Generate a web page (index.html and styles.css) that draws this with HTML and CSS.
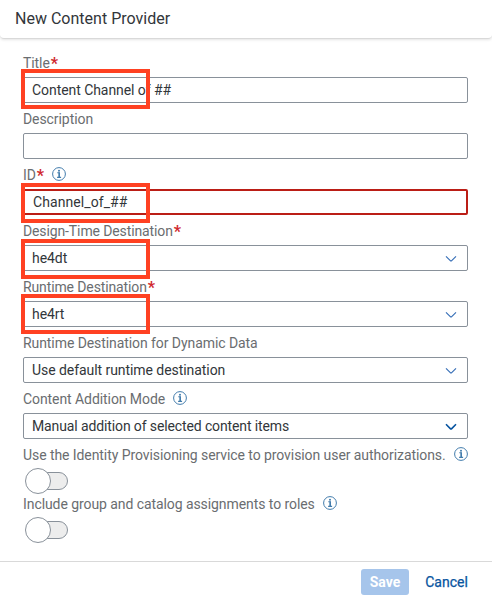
FILE: index.html
```html
<!DOCTYPE html>
<html lang="en">
<head>
<meta charset="utf-8">
<title>New Content Provider</title>
<link rel="stylesheet" href="styles.css">
</head>
<body>
<svg class="defs" width="0" height="0" aria-hidden="true">
  <symbol id="info" viewBox="0 0 14 14"><circle cx="7" cy="7" r="6.4" fill="none" stroke="currentColor" stroke-width="1"/><circle cx="7" cy="3.7" r="1" fill="currentColor"/><path d="M5.3 5.8H7.3V10.4M5.1 10.4H9.1" fill="none" stroke="currentColor" stroke-width="1.1"/><path d="M7.2 5.4V10.4" stroke="currentColor" stroke-width="1.5"/></symbol>
  <symbol id="chevron" viewBox="0 0 12 8"><path d="M1 1.3L5.3 5.6Q6 6.3 6.7 5.6L11 1.3" fill="none" stroke="currentColor"/></symbol>
</svg>
<main class="dialog">
  <header class="header"><h1 class="title">New Content Provider</h1></header>
  <form class="form">
    <div class="field"><label class="label"><span>Title</span><b class="required">*</b></label><div class="input"><span>Content Channel of ##</span></div><i class="highlight raised"></i></div>
    <div class="field"><label class="label"><span>Description</span></label><div class="input"></div></div>
    <div class="field"><label class="label"><span>ID</span><b class="required">*</b><svg class="info"><use href="#info"/></svg></label><div class="input error"><span>Channel_of_##</span></div><i class="highlight"></i></div>
    <div class="field"><label class="label"><span class="tight">Design-Time Destination</span><b class="required">*</b></label><div class="input"><span>he4dt</span><svg class="chevron"><use href="#chevron"/></svg></div><i class="highlight"></i></div>
    <div class="field"><label class="label"><span class="tight">Runtime Destination</span><b class="required">*</b></label><div class="input"><span>he4rt</span><svg class="chevron"><use href="#chevron"/></svg></div><i class="highlight middle"></i></div>
    <div class="field"><label class="label"><span>Runtime Destination for Dynamic Data</span></label><div class="input"><span>Use default runtime destination</span><svg class="chevron"><use href="#chevron"/></svg></div></div>
    <div class="field"><label class="label"><span>Content Addition Mode</span><svg class="info"><use href="#info"/></svg></label><div class="input"><span class="tight">Manual addition of selected content items</span><svg class="chevron strong"><use href="#chevron"/></svg></div></div>
    <div class="toggle"><label class="label"><span>Use the Identity Provisioning service to provision user authorizations.</span><svg class="info"><use href="#info"/></svg></label><div class="switch"><span class="knob"></span><span class="track"></span></div></div>
    <div class="toggle"><label class="label"><span>Include group and catalog assignments to roles</span><svg class="info"><use href="#info"/></svg></label><div class="switch"><span class="knob"></span><span class="track"></span></div></div>
  </form>
  <footer class="footer"><button class="save">Save</button><button class="cancel">Cancel</button></footer>
</main>
</body>
</html>
```
FILE: styles.css
```css
* { box-sizing: border-box; }
body { margin: 0; background: #fff; font-family: Roboto, "Liberation Sans", sans-serif; font-size: 14px; color: #32363a; }
.defs { position: absolute; }
.dialog { width: 492px; height: 600px; display: flex; flex-direction: column; overflow: hidden; }
.header { height: 39px; flex: none; padding: 0 15px; border-bottom: 1px solid #d9d9d9; border-radius: 0 0 4px 4px; box-shadow: 0 1px 3px #0000001c; }
.title { margin: 0; font-size: 16px; line-height: 37px; font-weight: 400; letter-spacing: .01px; }
.form { flex: 1; padding: 8px 24px 0 23px; }
.field { position: relative; height: 56px; }
.label { display: flex; align-items: center; height: 30px; padding-top: 2px; line-height: 20px; color: #6a6d70; white-space: nowrap; letter-spacing: -.075px; }
.required { color: #d0292e; font-size: 16px; line-height: 14px; margin: 2px 0 0 1px; }
.info { flex: none; width: 14px; height: 14px; margin: -2px 0 0 8px; color: #427cac; }
.input { height: 26px; border: 1px solid #89919a; border-radius: 2px; padding: 0 10px 0 8px; display: flex; align-items: center; justify-content: space-between; white-space: nowrap; letter-spacing: -.06px; }
.tight { letter-spacing: -.12px; }
.error { border: 2px solid #bb1e16; letter-spacing: .08px; }
.chevron { width: 12px; height: 8px; color: #376fb7; margin-top: 1px; stroke-width: 1.15px; }
.strong { stroke-width: 1.6px; color: #0854a0; }
.highlight { position: absolute; left: -2px; top: 24px; width: 129px; height: 40px; border: 4px solid #ff4122; z-index: 1; }
.raised { top: 22px; }
.middle { top: 23px; }
.toggle { height: 49px; }
.toggle .label { height: 29px; }
.switch { display: flex; align-items: center; height: 26px; margin: 0 0 0 2px; }
.knob { width: 26px; height: 26px; border: 1px solid #89919a; border-radius: 50%; background: #fff; z-index: 1; }
.track { width: 30px; height: 18px; margin-left: -13px; border: 1px solid #89919a; border-radius: 0 9px 9px 0; background: #ededed; }
.footer { height: 39px; flex: none; border-top: 1px solid #d9d9d9; display: flex; justify-content: flex-end; padding: 7px 24px 0 0; gap: 16px; }
.footer button { height: 26px; padding: 0; border: 0; border-radius: 3px; background: none; font: 14px/26px Roboto, sans-serif; }
.footer .save { width: 48px; background: #a6c5eb; color: #fff; font-weight: 700; }
.footer .cancel { width: 43px; color: #0854a0; -webkit-text-stroke: .25px #0854a0; white-space: nowrap; }
```
